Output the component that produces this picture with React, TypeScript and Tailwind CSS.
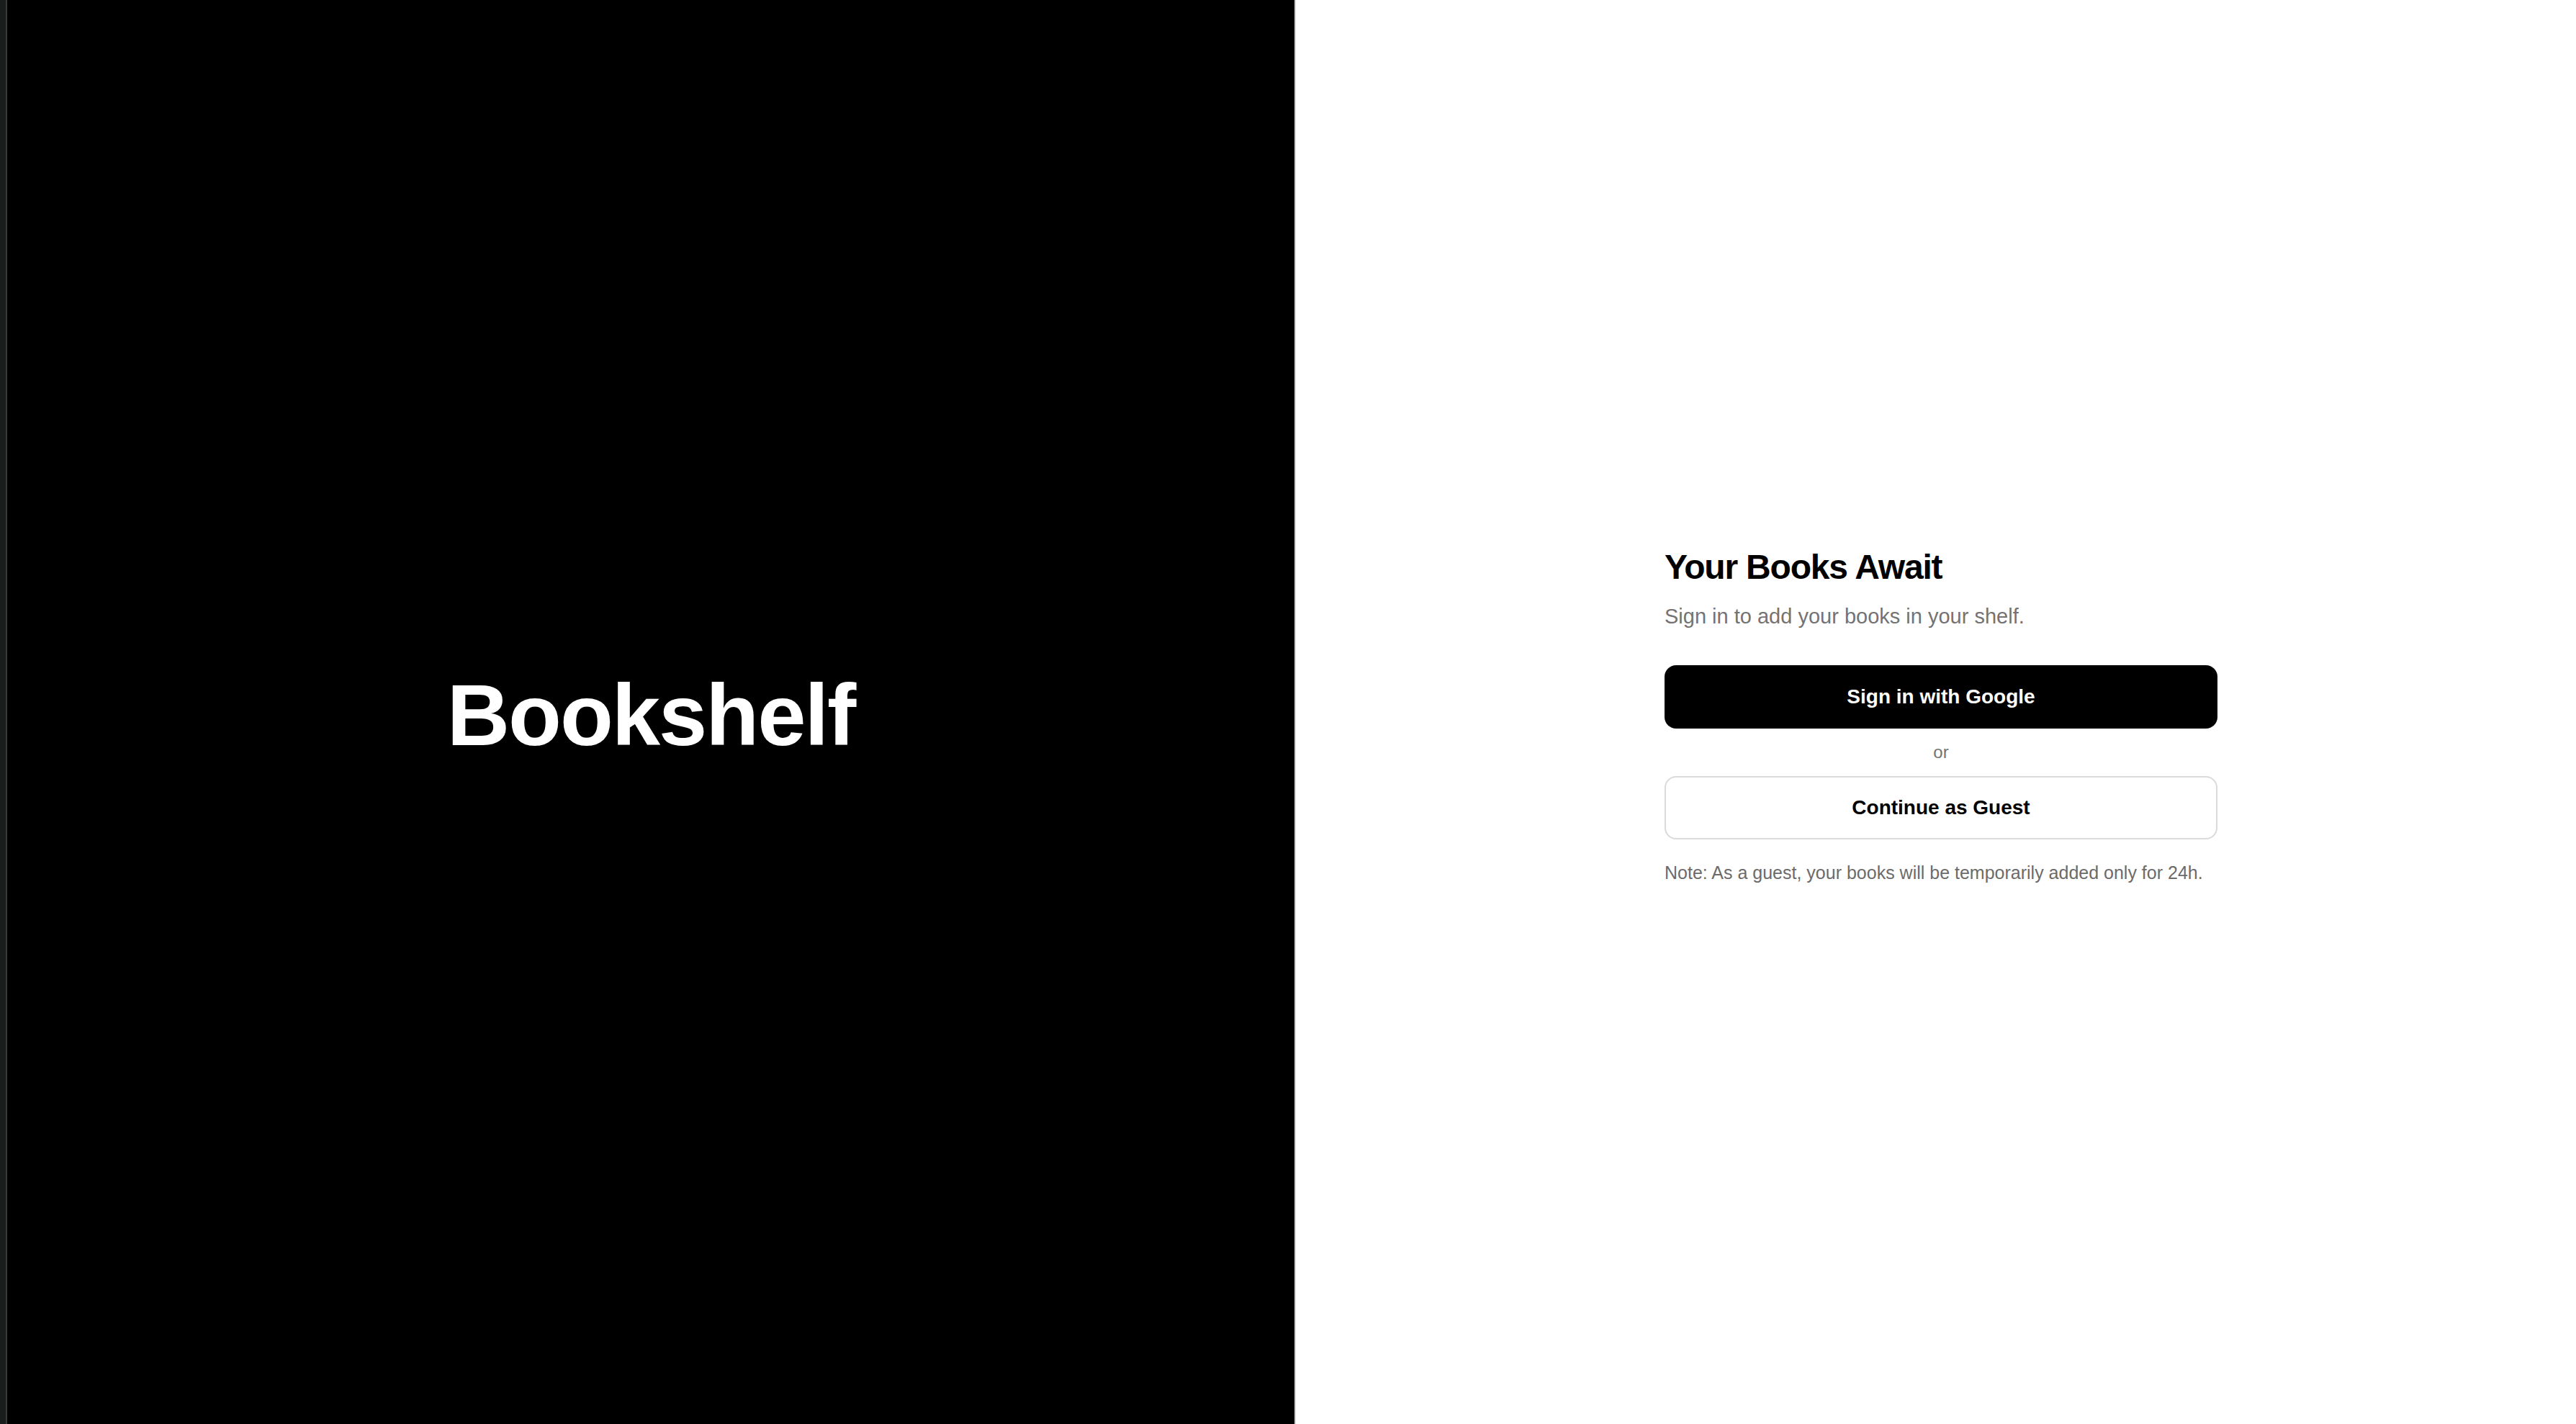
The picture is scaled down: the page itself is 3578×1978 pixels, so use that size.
export default function App() {
  return (
    <div
      className="flex h-[1978px] w-full overflow-hidden bg-white"
      style={{ fontFamily: '"Liberation Sans", Arial, sans-serif' }}
    >
      {/* window edge */}
      <div className="w-[8px] shrink-0 bg-[#1b1c1c]" />
      <div className="w-[2px] shrink-0 bg-[#3a3a3a]" />

      {/* LEFT - brand */}
      <div className="flex flex-1 items-center justify-center bg-black pt-[8px]">
        <h1 className="text-[121px] font-bold leading-none tracking-[-0.017em] text-white">
          Bookshelf
        </h1>
      </div>

      {/* RIGHT - sign in */}
      <div className="flex w-[1780px] shrink-0 items-center justify-center border-l-2 border-[#d4d4d4] bg-white pl-[14px] pt-[6px]">
        <div className="flex w-[768px] flex-col">
          <h2 className="text-[48px] font-bold leading-[64px] tracking-tight text-black">
            Your Books Await
          </h2>
          <p className="mt-4 text-[29px] leading-[40px] text-[#737373]">
            Sign in to add your books in your shelf.
          </p>

          <div className="mt-12 flex flex-col gap-[17px]">
            <button className="h-[88px] w-full rounded-2xl bg-black text-[28px] font-semibold text-white">
              Sign in with Google
            </button>
            <p className="text-center text-[24px] leading-[32px] text-[#737373]">or</p>
            <button className="h-[88px] w-full rounded-2xl border-2 border-[#dadada] bg-white text-[28px] font-semibold text-black">
              Continue as Guest
            </button>
          </div>

          <p className="mt-[30px] text-[25px] leading-[32px] text-[#6b6b6b]">
            Note: As a guest, your books will be temporarily added only for 24h.
          </p>
        </div>
      </div>
    </div>
  );
}
